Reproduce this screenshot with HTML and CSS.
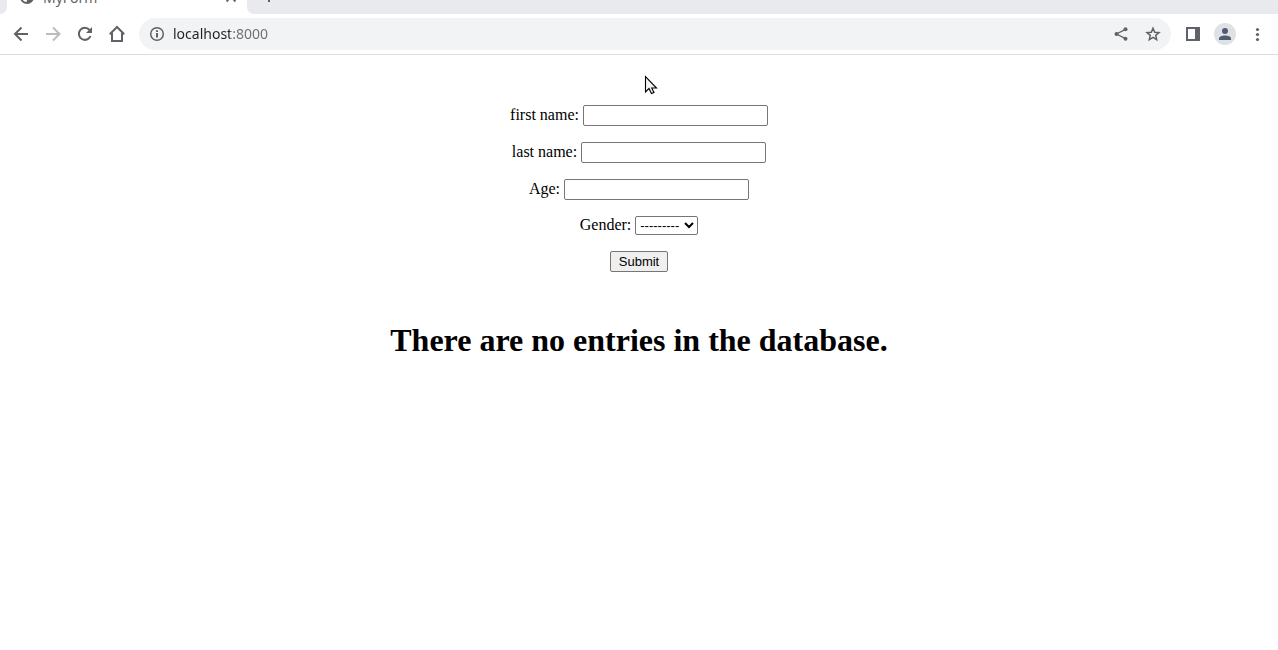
FILE: index.html
```html
<!DOCTYPE html>
<html lang="en">
<head>
<meta charset="utf-8">
<meta name="viewport" content="width=device-width, initial-scale=1">
<title>MyForm</title>
<link rel="stylesheet" href="styles.css">
</head>
<body>
<header class="browser">
  <div class="tabstrip">
    <div class="strip-start"></div>
    <div class="tab">
      <svg class="favicon" viewBox="0 0 16 16" aria-hidden="true"><circle cx="8" cy="8" r="7" fill="#5f6368"/><path d="M2.500 7l4 1 2 2-1 3C4.500 13 2.500 10 2.500 7zM8 2l5 2-1 3-3 1 1 1.500h3.500c.5-4-2-7-5.500-7z" fill="#fff"/></svg>
      <span class="tab-title">MyForm</span>
      <button class="tab-close" aria-label="Close tab"><svg width="16" height="16" viewBox="0 0 16 16"><path d="M4 4l8.500 8.500M12 4l-8.500 8.500" stroke="#5f6368" stroke-width="1.800"/></svg></button>
    </div>
    <div class="strip-rest">
      <button class="new-tab" aria-label="New tab"><svg width="14" height="14" viewBox="0 0 14 14"><path d="M8 1v12M2 7h12" stroke="#5f6368" stroke-width="2"/></svg></button>
    </div>
  </div>
  <nav class="toolbar" aria-label="Browser toolbar">
    <button class="tool" aria-label="Back"><svg width="20" height="20" viewBox="0 0 20 20"><path d="M17 10H4.500M10.500 3.500L4 10l6.500 6.500" fill="none" stroke="#5f6368" stroke-width="2"/></svg></button>
    <button class="tool" aria-label="Forward" disabled><svg width="20" height="20" viewBox="0 0 20 20"><path d="M3 10h13M10 3.500L16.500 10 10 16.500" fill="none" stroke="#babcbe" stroke-width="2"/></svg></button>
    <button class="tool" aria-label="Reload"><svg width="20" height="20" viewBox="0 0 20 20"><path d="M15.500 12A6 6 0 1 1 14.500 6" fill="none" stroke="#5f6368" stroke-width="2"/><path d="M17 3v6h-6z" fill="#5f6368"/></svg></button>
    <button class="tool" aria-label="Home"><svg width="20" height="20" viewBox="0 0 20 20"><path d="M2.800 10.300L10 3l7.200 7.300M5 9v8h10V9" fill="none" stroke="#5f6368" stroke-width="2"/></svg></button>
    <div class="omnibox">
      <button class="tool" aria-label="Site information"><svg width="16" height="16" viewBox="0 0 16 16"><circle cx="8" cy="8" r="6.300" fill="none" stroke="#5f6368" stroke-width="1.500"/><path d="M8 7v4.500M8 4.200v1.800" stroke="#5f6368" stroke-width="2"/></svg></button>
      <input class="address" type="text" value="localhost:8000" aria-label="Address">
      <button class="tool" aria-label="Share"><svg width="16" height="16" viewBox="0 0 16 16"><path d="M12.500 3.300L3.500 8l9 4.700" fill="none" stroke="#5f6368" stroke-width="1.300"/><g fill="#5f6368"><circle cx="12.500" cy="3.300" r="2"/><circle cx="3.500" cy="8" r="2"/><circle cx="12.500" cy="12.700" r="2"/></g></svg></button>
      <button class="tool" aria-label="Bookmark this page"><svg width="16" height="16" viewBox="0 0 16 16"><path d="M8 2.200l1.700 4 4.300.4-3.300 2.800 1 4.300L8 11.400l-3.700 2.300 1-4.300L2 6.600l4.300-.4z" fill="none" stroke="#5f6368" stroke-width="1.500"/></svg></button>
    </div>
    <button class="tool" aria-label="Side panel"><svg width="16" height="16" viewBox="0 0 16 16"><path d="M1 1h14v14H1zM3 3v10h7V3z" fill="#5f6368" fill-rule="evenodd"/></svg></button>
    <button class="tool" aria-label="Profile"><svg width="22" height="22" viewBox="0 0 22 22"><circle cx="11" cy="11" r="11" fill="#dee1e6"/><circle cx="11" cy="8" r="3" fill="#525c70"/><path d="M5 17v-1.500C5 13.500 8 12.500 11 12.500s6 1 6 3V17z" fill="#525c70"/></svg></button>
    <button class="tool" aria-label="Menu"><svg width="16" height="16" viewBox="0 0 16 16"><g fill="#5f6368"><circle cx="8.500" cy="3.500" r="1.600"/><circle cx="8.500" cy="8.500" r="1.600"/><circle cx="8.500" cy="13.500" r="1.600"/></g></svg></button>
  </nav>
</header>
<main class="page">
  <form class="entry-form">
    <p class="field"><label for="first">first name:</label> <input class="text-field" id="first" type="text"></p>
    <p class="field"><label for="last">last name:</label> <input class="text-field" id="last" type="text"></p>
    <p class="field"><label for="age">Age:</label> <input class="text-field" id="age" type="text"></p>
    <p class="field"><label for="gender">Gender:</label> <select class="choice" id="gender"><option>---------</option></select></p>
    <button class="submit" type="submit">Submit</button>
  </form>
  <h1 class="message">There are no entries in the database.</h1>
</main>
<svg class="pointer" width="14" height="21" viewBox="0 0 14 21" aria-hidden="true"><path d="M1.500 1.500v15.500l3.500-3.500 2.500 5 2.500-1-2.300-4.500h4.800z" fill="#f4f4f4" stroke="#000" stroke-width="1.100"/></svg>
</body>
</html>
```
FILE: styles.css
```css
body {
  margin: 0;
  background: #fff;
  color: #000;
  font: 16px "Liberation Serif", serif;
}

.browser {
  border-bottom: 1px solid #dadce0;
  font-family: "Noto Sans", sans-serif;
}

.tabstrip {
  display: flex;
  align-items: flex-end;
  height: 14px;
  overflow: hidden;
}

.strip-start,
.strip-rest {
  height: 36px;
  background: #e8eaed;
}

.strip-start {
  width: 7px;
  border-bottom-right-radius: 7px;
}

.strip-rest {
  display: flex;
  flex: 1;
  align-items: center;
  padding-left: 14px;
  border-bottom-left-radius: 7px;
}

.tab {
  display: flex;
  flex: 0 0 240px;
  align-items: center;
  gap: 8px;
  height: 34px;
  padding: 0 8px 0 12px;
  box-sizing: border-box;
}

.favicon {
  width: 16px;
  height: 16px;
}

.tab-title {
  flex: 1;
  color: #5f6368;
  font-size: 14px;
}

.tab-close,
.new-tab,
.tool {
  display: flex;
  align-items: center;
  justify-content: center;
  padding: 0;
  border: 0;
  background: none;
}

.toolbar {
  display: flex;
  align-items: center;
  height: 40px;
  padding: 0 5px;
}

.tool {
  flex: none;
  width: 32px;
  height: 32px;
}

.omnibox {
  display: flex;
  flex: 1;
  align-items: center;
  margin: 0 6px;
  padding: 0 2px;
  border-radius: 16px;
  background: #f1f3f4;
}

.address {
  flex: 1;
  min-width: 0;
  padding: 0 0 2px;
  border: 0;
  outline: 0;
  background: linear-gradient(90deg, #202124 57px, #6b6f74 57px);
  background-clip: text;
  color: transparent;
  font: 14px "Noto Sans", sans-serif;
}

.page {
  padding: 50px 8px 0;
  text-align: center;
}

.field {
  margin: 0 0 16px;
}

.text-field,
.choice,
.submit {
  font: 13px "Liberation Sans", sans-serif;
  border: 1px solid #767676;
  border-radius: 2px;
  color: #000;
}

.text-field {
  width: 185px;
  height: 21px;
  padding: 1px 2px;
  box-sizing: border-box;
  background: #fff;
}

.choice {
  width: 63px;
  height: 19px;
  background: #fff;
}

.submit {
  width: 58px;
  height: 21px;
  padding: 1px 6px;
  background: #efefef;
}

.message {
  margin: 50px 0 0;
  font-size: 32px;
}

.pointer {
  position: absolute;
  top: 75px;
  left: 644px;
}
```
